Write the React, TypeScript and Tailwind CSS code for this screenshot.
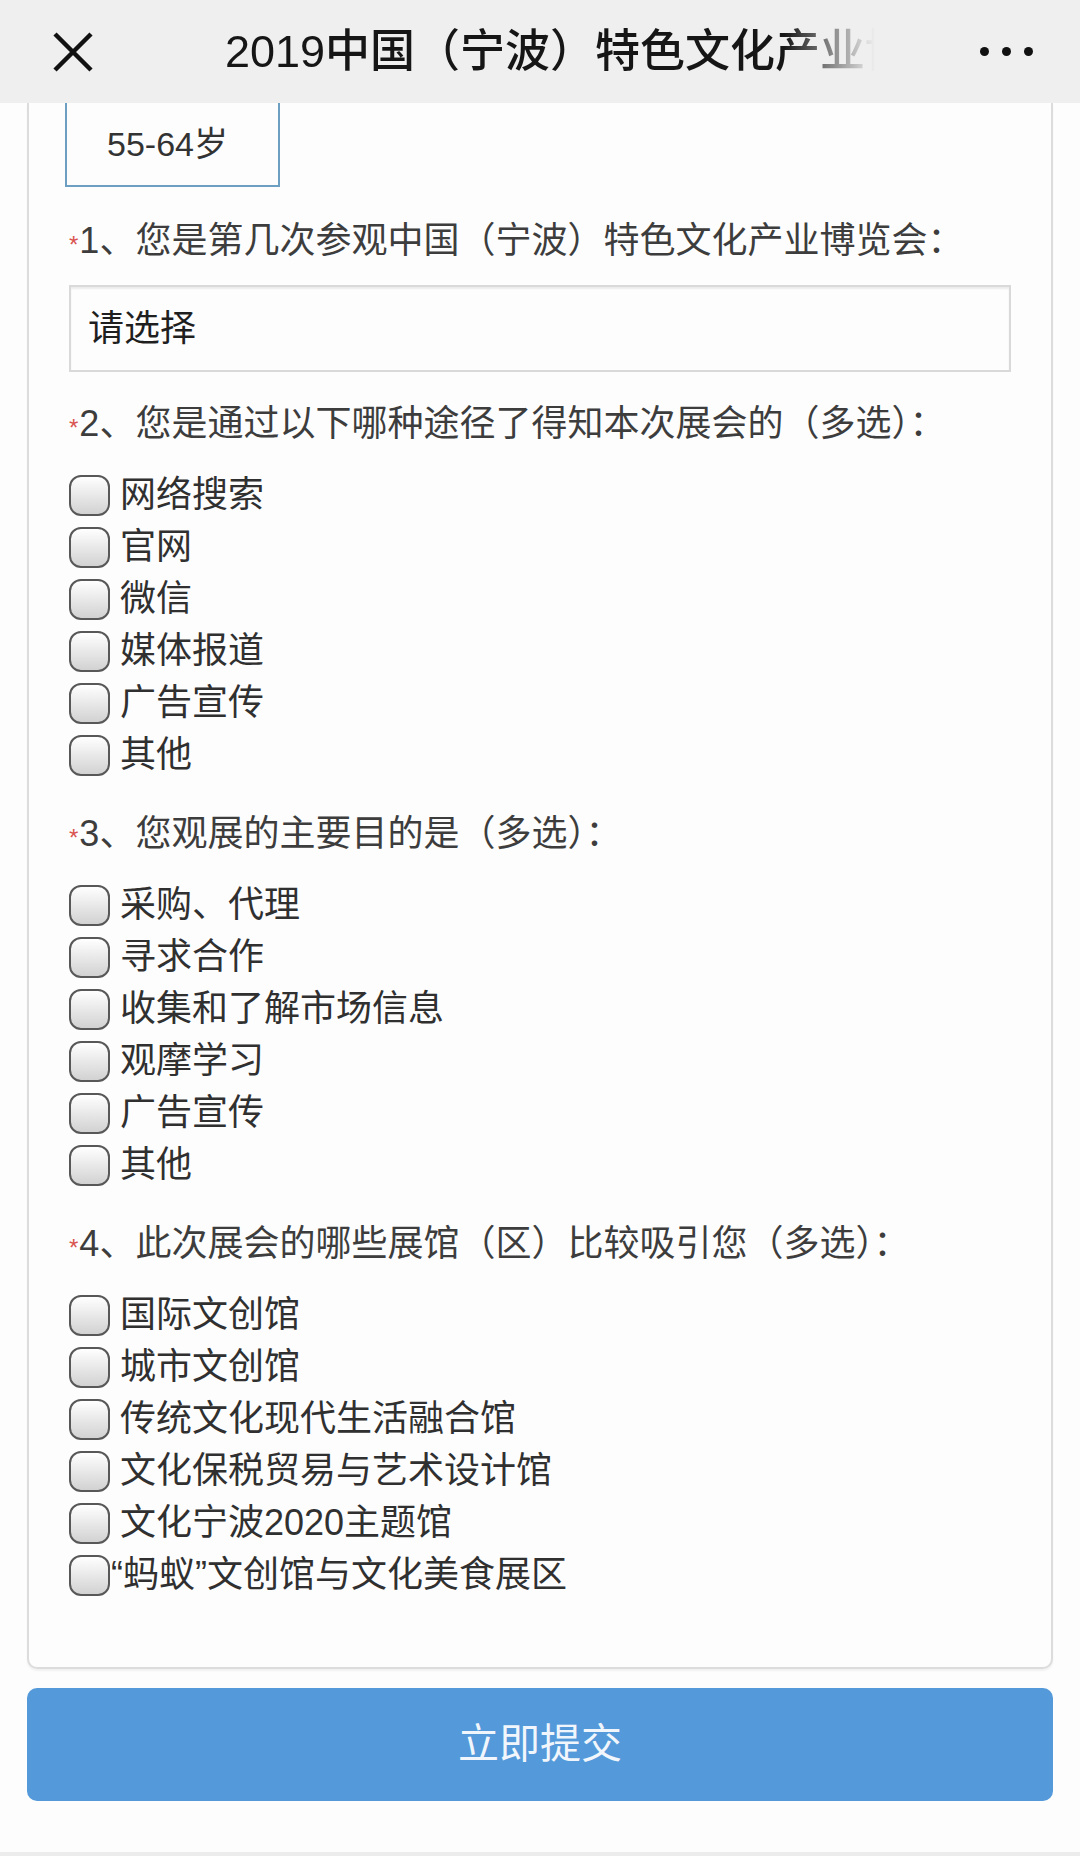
const font = "font-['Liberation_Sans','Noto_Sans_CJK_SC',sans-serif]";

interface Question {
  no: number;
  title: string;
  options: string[];
}

const questions: Question[] = [
  {
    no: 2,
    title: "您是通过以下哪种途径了得知本次展会的（多选）：",
    options: ["网络搜索", "官网", "微信", "媒体报道", "广告宣传", "其他"],
  },
  {
    no: 3,
    title: "您观展的主要目的是（多选）：",
    options: ["采购、代理", "寻求合作", "收集和了解市场信息", "观摩学习", "广告宣传", "其他"],
  },
  {
    no: 4,
    title: "此次展会的哪些展馆（区）比较吸引您（多选）：",
    options: [
      "国际文创馆",
      "城市文创馆",
      "传统文化现代生活融合馆",
      "文化保税贸易与艺术设计馆",
      "文化宁波2020主题馆",
      "“蚂蚁”文创馆与文化美食展区",
    ],
  },
];

function Label({ no, text }: { no: number; text: string }) {
  return (
    <div className="h-[48px] flex items-center text-[36px] leading-[48px] text-[#3d3d3d] whitespace-nowrap">
      <span className="text-[24px] text-[#d9534f] self-start mt-[4px] mr-[1px]">*</span>
      <span>{no}</span>
      <span>、{text}</span>
    </div>
  );
}

function Checkbox() {
  return (
    <span className="w-[41px] h-[41px] shrink-0 rounded-[12px] border-[2.5px] border-[#585858] bg-linear-to-b from-white to-[#d2d2d2]" />
  );
}

function OptionRow({ text }: { text: string }) {
  // the curly quote sits right against the box in the original
  const tight = text.startsWith("“");
  return (
    <div className="h-[52px] flex items-center">
      <Checkbox />
      <span className={`text-[36px] leading-none text-[#303030] whitespace-nowrap ${tight ? "ml-[1px]" : "ml-[10px]"}`}>
        {text}
      </span>
    </div>
  );
}

export default function App() {
  return (
    <div className={`${font} w-[1080px] h-[1856px] bg-[#fdfdfe] flex flex-col overflow-hidden`}>
      <header className="h-[103px] shrink-0 bg-[#efefef] flex items-center">
        <svg className="ml-[53px] shrink-0" width="40" height="40" viewBox="0 0 40 40">
          <path d="M2 2 L38 38 M38 2 L2 38" stroke="#111" strokeWidth="4.5" fill="none" />
        </svg>
        <div className="ml-[132px] w-[650px] overflow-hidden whitespace-nowrap text-[45px] font-medium text-[#161616] [mask-image:linear-gradient(to_right,black_86%,transparent)]">
          2019中国（宁波）特色文化产业博览会观众调查
        </div>
        <div className="ml-auto mr-[47px] flex gap-[13px]">
          <span className="w-[9px] h-[9px] rounded-full bg-[#111]" />
          <span className="w-[9px] h-[9px] rounded-full bg-[#111]" />
          <span className="w-[9px] h-[9px] rounded-full bg-[#111]" />
        </div>
      </header>

      <main className="flex-1 flex flex-col">
        <div className="mx-[27px] border-x-2 border-b-2 border-[#dcdcdc] rounded-b-[10px] px-[40px] pb-[66px] shadow-[0_2px_2px_rgba(0,0,0,0.05)] flex flex-col">
          <div className="-ml-[4px] w-[215px] h-[84px] border-x-2 border-b-2 border-[#6d9fc2] flex items-center pl-[40px] text-[34px] text-[#333]">
            55-64岁
          </div>

          <div className="mt-[30px]">
            <Label no={1} text="您是第几次参观中国（宁波）特色文化产业博览会：" />
          </div>
          <div className="mt-[20px] h-[87px] border-2 border-[#d9d9d9] shadow-[inset_0_2px_2px_rgba(0,0,0,0.07)] flex items-center pl-[17px] text-[36px] text-[#1f1f1f]">
            请选择
          </div>

          {questions.map((q, i) => (
            <div key={q.no} className={i === 0 ? "mt-[28px]" : "mt-[29px]"}>
              <Label no={q.no} text={q.title} />
              <div className="mt-[21px] flex flex-col">
                {q.options.map(o => (
                  <OptionRow key={o} text={o} />
                ))}
              </div>
            </div>
          ))}
        </div>

        <button className="mx-[27px] mt-[19px] h-[113px] shrink-0 rounded-[10px] bg-[#5499d9] text-[41px] text-[#f1f6fc] flex items-center justify-center">
          立即提交
        </button>
      </main>

      <div className="h-[4px] shrink-0 bg-[#ececec]" />
    </div>
  );
}
